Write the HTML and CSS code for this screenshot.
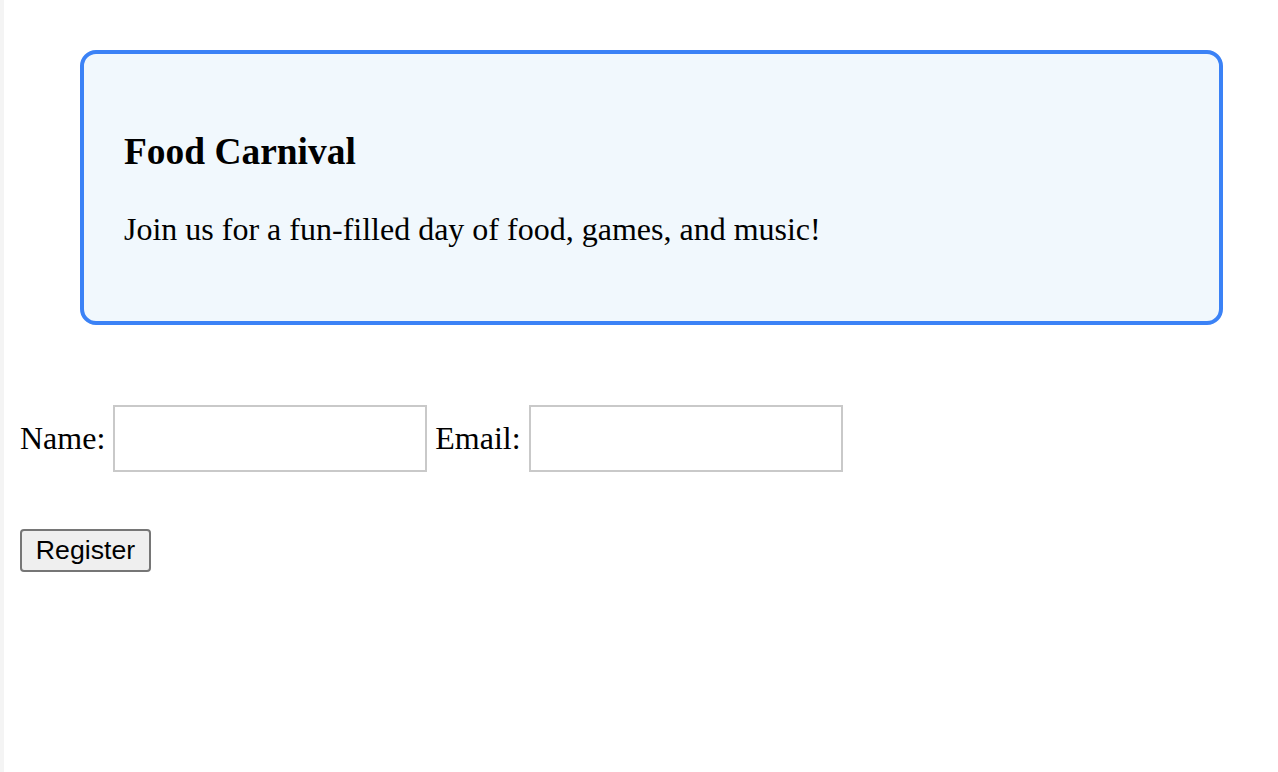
FILE: index.html
```html
<!DOCTYPE html>
<html>
<head>
<meta charset="utf-8">
<link rel="stylesheet" href="styles.css">
</head>
<body>
<div class="strip"></div>
<main class="page">
  <section class="event">
    <h3 class="event-title">Food Carnival</h3>
    <p class="event-desc">Join us for a fun-filled day of food, games, and music!</p>
  </section>
  <form class="reg">
    <div class="fields">
      <label class="lbl" for="name">Name:</label>
      <input class="inp" id="name" type="text">
      <label class="lbl" for="email">Email:</label>
      <input class="inp" id="email" type="email">
    </div>
    <button class="btn" type="button">Register</button>
  </form>
</main>
</body>
</html>
```

FILE: styles.css
```css
html, body {
  margin: 0;
  padding: 0;
  background: #ffffff;
  height: 100%;
}
body {
  display: flex;
  font-family: "Liberation Serif", "Times New Roman", serif;
  color: #000;
}
.strip {
  width: 4px;
  flex: none;
  background: #f4f4f4;
}
.page {
  flex: 1;
  padding: 50px 55px 0 16px;
}
.event {
  margin-left: 60px;
  height: 275px;
  box-sizing: border-box;
  border: 4px solid #3b82f6;
  border-radius: 16px;
  background: #f1f8fd;
  padding: 76px 40px 0;
}
.event-title {
  margin: 0;
  font-size: 37.44px;
  line-height: 43px;
  font-weight: bold;
}
.event-desc {
  margin: 37.5px 0 0;
  font-size: 32px;
  line-height: 37px;
}
.reg {
  margin-top: 80px;
}
.fields {
  display: flex;
  align-items: center;
  gap: 8px;
  font-size: 32px;
}
.inp {
  width: 314px;
  height: 67px;
  box-sizing: border-box;
  border: 2px solid #c9c9c9;
  margin: 0;
  padding: 0;
  background: #fff;
}
.btn {
  display: block;
  margin-top: 57px;
  font-family: "Liberation Sans", Arial, sans-serif;
  font-size: 26.67px;
  height: 43px;
  width: 131px;
  padding: 0;
  background: #efefef;
  border: 2px solid #767676;
  border-radius: 4px;
  color: #000;
}
```
